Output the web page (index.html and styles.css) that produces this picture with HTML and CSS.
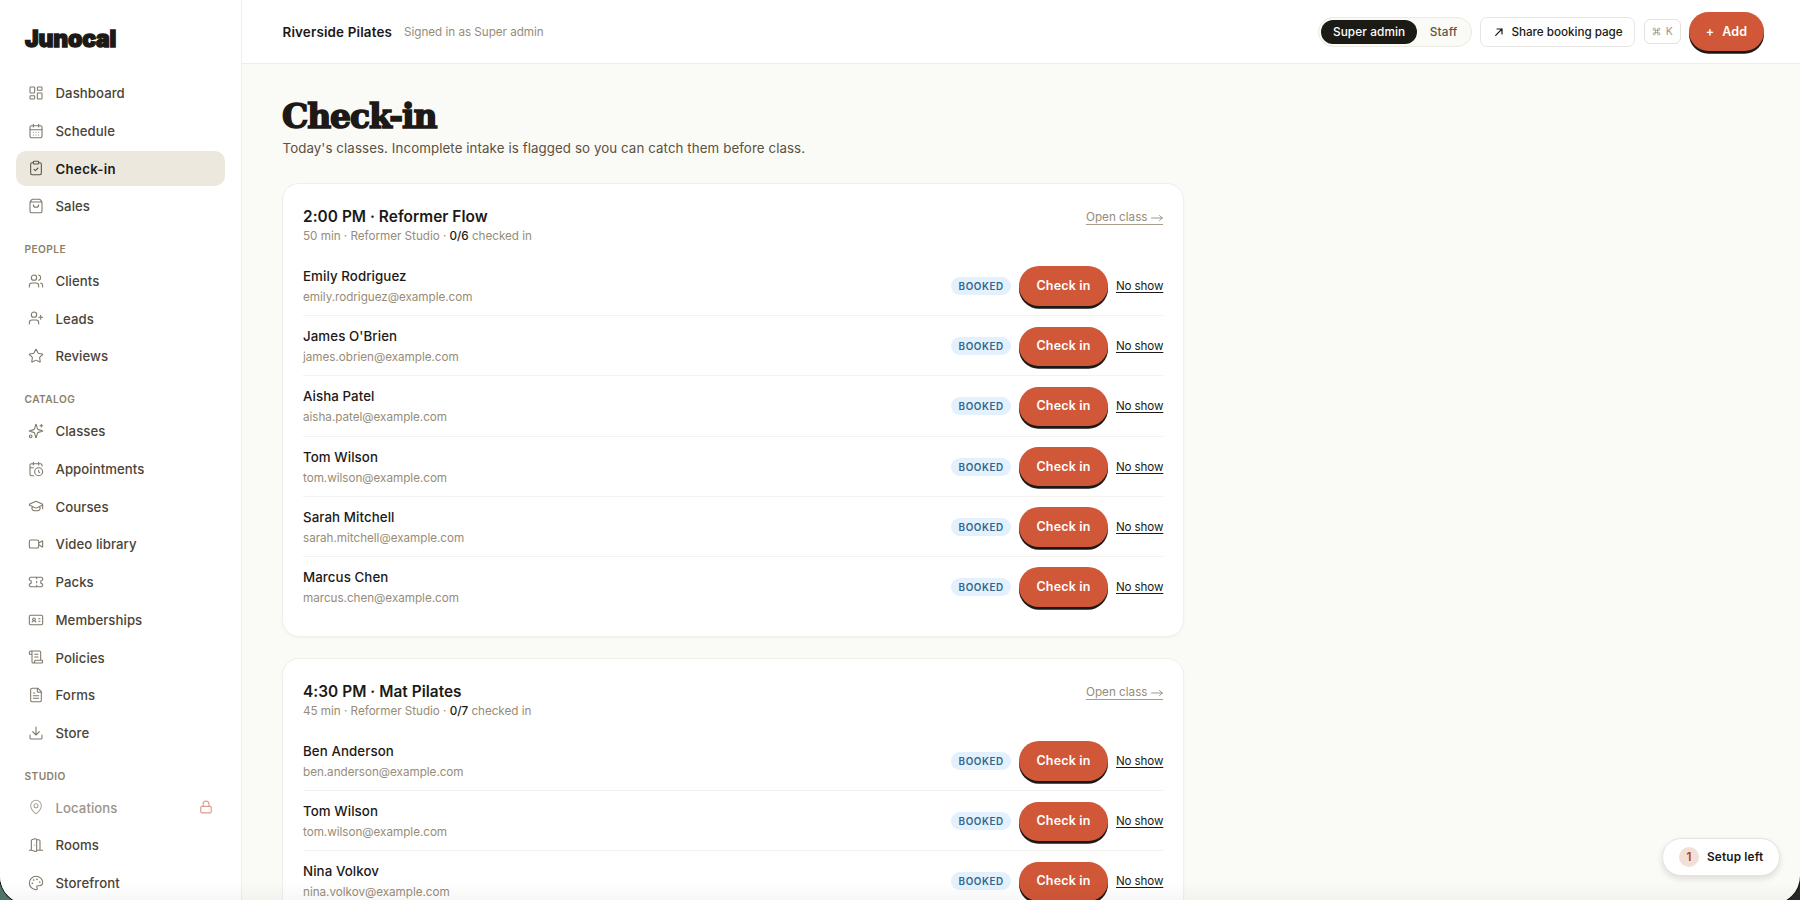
FILE: index.html
```html
<!DOCTYPE html>
<html lang="en">
<head>
<meta charset="utf-8">
<title>Check-in · Riverside Pilates</title>
<link rel="stylesheet" href="styles.css">
</head>
<body>
<div class="window">
  <aside class="sidebar">
    <div class="logo">Junocal</div>
    <nav class="nav">
      <a class="item"><svg class="icon" viewBox="0 0 24 24"><rect width="7" height="9" x="3" y="3" rx="1"/><rect width="7" height="5" x="14" y="3" rx="1"/><rect width="7" height="9" x="14" y="12" rx="1"/><rect width="7" height="5" x="3" y="16" rx="1"/></svg><span>Dashboard</span></a>
      <a class="item"><svg class="icon" viewBox="0 0 24 24"><path d="M8 2v4M16 2v4M3 10h18M8 14h.01M12 14h.01M16 14h.01M8 18h.01M12 18h.01M16 18h.01"/><rect width="18" height="18" x="3" y="4" rx="2"/></svg><span>Schedule</span></a>
      <a class="item active"><svg class="icon" viewBox="0 0 24 24"><rect width="8" height="4" x="8" y="2" rx="1"/><path d="M16 4h2a2 2 0 0 1 2 2v14a2 2 0 0 1-2 2H6a2 2 0 0 1-2-2V6a2 2 0 0 1 2-2h2M9 14l2 2 4-4"/></svg><span>Check-in</span></a>
      <a class="item"><svg class="icon" viewBox="0 0 24 24"><path d="M3.4 5.5 5.4 2.8A2 2 0 0 1 7 2h10a2 2 0 0 1 1.6.8l2 2.7A2 2 0 0 1 21 6.7V20a2 2 0 0 1-2 2H5a2 2 0 0 1-2-2V6.7a2 2 0 0 1 .4-1.2zM3.1 6h17.8M16 10a4 4 0 0 1-8 0"/></svg><span>Sales</span></a>

      <h2 class="group">People</h2>
      <a class="item"><svg class="icon" viewBox="0 0 24 24"><path d="M16 21v-2a4 4 0 0 0-4-4H6a4 4 0 0 0-4 4v2M22 21v-2a4 4 0 0 0-3-3.87M16 3.13a4 4 0 0 1 0 7.75"/><circle cx="9" cy="7" r="4"/></svg><span>Clients</span></a>
      <a class="item"><svg class="icon" viewBox="0 0 24 24"><path d="M16 21v-2a4 4 0 0 0-4-4H6a4 4 0 0 0-4 4v2M19 8v6M22 11h-6"/><circle cx="9" cy="7" r="4"/></svg><span>Leads</span></a>
      <a class="item"><svg class="icon" viewBox="0 0 24 24"><path d="M11.525 2.295a.53.53 0 0 1 .95 0l2.31 4.679a2.12 2.12 0 0 0 1.595 1.16l5.166.756a.53.53 0 0 1 .294.904l-3.736 3.638a2.12 2.12 0 0 0-.611 1.878l.882 5.14a.53.53 0 0 1-.771.56l-4.618-2.428a2.12 2.12 0 0 0-1.973 0L6.396 21.01a.53.53 0 0 1-.77-.56l.881-5.139a2.12 2.12 0 0 0-.611-1.879L2.16 9.795a.53.53 0 0 1 .294-.906l5.165-.755a2.12 2.12 0 0 0 1.597-1.16z"/></svg><span>Reviews</span></a>

      <h2 class="group">Catalog</h2>
      <a class="item"><svg class="icon" viewBox="0 0 24 24"><path d="M9.937 15.5A2 2 0 0 0 8.5 14.063l-6.135-1.582a.5.5 0 0 1 0-.962L8.5 9.936A2 2 0 0 0 9.937 8.5l1.582-6.135a.5.5 0 0 1 .963 0L14.063 8.5A2 2 0 0 0 15.5 9.937l6.135 1.581a.5.5 0 0 1 0 .964L15.5 14.063a2 2 0 0 0-1.437 1.437l-1.582 6.135a.5.5 0 0 1-.963 0zM20 2v4M22 4h-4"/><circle cx="4" cy="20" r="2"/></svg><span>Classes</span></a>
      <a class="item"><svg class="icon" viewBox="0 0 24 24"><path d="M21 7.5V6a2 2 0 0 0-2-2H5a2 2 0 0 0-2 2v14a2 2 0 0 0 2 2h3.5M16 2v4M8 2v4M3 10h5M17.5 17.5 16 16.3V14"/><circle cx="16" cy="16" r="6"/></svg><span>Appointments</span></a>
      <a class="item"><svg class="icon" viewBox="0 0 24 24"><path d="M21.42 10.922a1 1 0 0 0-.019-1.838L12.83 5.18a2 2 0 0 0-1.66 0L2.6 9.08a1 1 0 0 0 0 1.832l8.57 3.908a2 2 0 0 0 1.66 0zM22 10v6M6 12.5V16a6 3 0 0 0 12 0v-3.5"/></svg><span>Courses</span></a>
      <a class="item"><svg class="icon" viewBox="0 0 24 24"><path d="m16 13 5.223 3.482a.5.5 0 0 0 .777-.416V7.87a.5.5 0 0 0-.752-.432L16 10.5"/><rect x="2" y="6" width="14" height="12" rx="2"/></svg><span>Video library</span></a>
      <a class="item"><svg class="icon" viewBox="0 0 24 24"><path d="M2 9a3 3 0 0 1 0 6v2a2 2 0 0 0 2 2h16a2 2 0 0 0 2-2v-2a3 3 0 0 1 0-6V7a2 2 0 0 0-2-2H4a2 2 0 0 0-2 2ZM13 5v2M13 17v2M13 11v2"/></svg><span>Packs</span></a>
      <a class="item"><svg class="icon" viewBox="0 0 24 24"><path d="M16 10h2M16 14h2M6.17 15a3 3 0 0 1 5.66 0"/><circle cx="9" cy="11" r="2"/><rect x="2" y="5" width="20" height="14" rx="2"/></svg><span>Memberships</span></a>
      <a class="item"><svg class="icon" viewBox="0 0 24 24"><path d="M15 12h-5M15 8h-5M19 17V5a2 2 0 0 0-2-2H4M8 21h12a2 2 0 0 0 2-2v-1a1 1 0 0 0-1-1H11a1 1 0 0 0-1 1v1a2 2 0 1 1-4 0V5a2 2 0 1 0-4 0v2a1 1 0 0 0 1 1h3"/></svg><span>Policies</span></a>
      <a class="item"><svg class="icon" viewBox="0 0 24 24"><path d="M15 2H6a2 2 0 0 0-2 2v16a2 2 0 0 0 2 2h12a2 2 0 0 0 2-2V7ZM14 2v4a2 2 0 0 0 2 2h4M10 9H8M16 13H8M16 17H8"/></svg><span>Forms</span></a>
      <a class="item"><svg class="icon" viewBox="0 0 24 24"><path d="M21 15v4a2 2 0 0 1-2 2H5a2 2 0 0 1-2-2v-4M7 10l5 5 5-5M12 15V3"/></svg><span>Store</span></a>

      <h2 class="group">Studio</h2>
      <a class="item locked"><svg class="icon" viewBox="0 0 24 24"><path d="M20 10c0 4.993-5.539 10.193-7.399 11.799a1 1 0 0 1-1.202 0C9.539 20.193 4 14.993 4 10a8 8 0 0 1 16 0"/><circle cx="12" cy="10" r="3"/></svg><span>Locations</span><svg class="lock" viewBox="0 0 24 24"><rect width="18" height="11" x="3" y="11" rx="2"/><path d="M7 11V7a5 5 0 0 1 10 0v4"/></svg></a>
      <a class="item"><svg class="icon" viewBox="0 0 24 24"><path d="M13 4h3a2 2 0 0 1 2 2v14M2 20h3M13 20h9M10 12v.01M13 4.562v16.157a1 1 0 0 1-1.242.97L5 20V5.562a2 2 0 0 1 1.515-1.94l4-1A2 2 0 0 1 13 4.561Z"/></svg><span>Rooms</span></a>
      <a class="item"><svg class="icon" viewBox="0 0 24 24"><path d="M12 22a1 1 0 0 1 0-20 10 9 0 0 1 10 9 5 5 0 0 1-5 5h-2.25a1.75 1.75 0 0 0-1.4 2.8l.3.4a1.75 1.75 0 0 1-1.4 2.8z"/><circle cx="13.5" cy="6.5" r=".5"/><circle cx="17.5" cy="10.5" r=".5"/><circle cx="6.5" cy="12.5" r=".5"/><circle cx="8.5" cy="7.5" r=".5"/></svg><span>Storefront</span></a>
    </nav>
  </aside>

  <div class="page">
    <header class="topbar">
      <div class="studio">Riverside Pilates</div>
      <div class="role">Signed in as Super admin</div>
      <div class="actions">
        <div class="switch"><span class="switch-on">Super admin</span><span class="switch-off">Staff</span></div>
        <a class="share"><svg class="arrow" viewBox="0 0 8 8"><path d="M.7 7.3 7 1M2 1h5v5"/></svg><span>Share booking page</span></a>
        <kbd class="shortcut"><svg class="cmd" viewBox="0 0 24 24"><path d="M15 6v12a3 3 0 1 0 3-3H6a3 3 0 1 0 3 3V6a3 3 0 1 0-3 3h12a3 3 0 1 0-3-3"/></svg>K</kbd>
        <button class="button add"><span>+</span><span>Add</span></button>
      </div>
    </header>

    <main class="content">
      <h1 class="title">Check-in</h1>
      <p class="lede">Today's classes. Incomplete intake is flagged so you can catch them before class.</p>

      <section class="card">
        <div class="card-head">
          <div>
            <h3 class="class-name">2:00 PM · Reformer Flow</h3>
            <p class="meta">50 min · Reformer Studio · <b>0/6</b> checked in</p>
          </div>
          <a class="open"><span>Open class</span><svg class="long" viewBox="0 0 12 8"><path d="M.5 4h11M8.5 1.5 11.3 4 8.5 6.5"/></svg></a>
        </div>
        <div class="row"><div class="person"><div class="name">Emily Rodriguez</div><div class="email">emily.rodriguez@example.com</div></div><span class="badge">Booked</span><button class="button check">Check in</button><a class="noshow">No show</a></div>
        <div class="row"><div class="person"><div class="name">James O'Brien</div><div class="email">james.obrien@example.com</div></div><span class="badge">Booked</span><button class="button check">Check in</button><a class="noshow">No show</a></div>
        <div class="row"><div class="person"><div class="name">Aisha Patel</div><div class="email">aisha.patel@example.com</div></div><span class="badge">Booked</span><button class="button check">Check in</button><a class="noshow">No show</a></div>
        <div class="row"><div class="person"><div class="name">Tom Wilson</div><div class="email">tom.wilson@example.com</div></div><span class="badge">Booked</span><button class="button check">Check in</button><a class="noshow">No show</a></div>
        <div class="row"><div class="person"><div class="name">Sarah Mitchell</div><div class="email">sarah.mitchell@example.com</div></div><span class="badge">Booked</span><button class="button check">Check in</button><a class="noshow">No show</a></div>
        <div class="row"><div class="person"><div class="name">Marcus Chen</div><div class="email">marcus.chen@example.com</div></div><span class="badge">Booked</span><button class="button check">Check in</button><a class="noshow">No show</a></div>
      </section>

      <section class="card">
        <div class="card-head">
          <div>
            <h3 class="class-name">4:30 PM · Mat Pilates</h3>
            <p class="meta">45 min · Reformer Studio · <b>0/7</b> checked in</p>
          </div>
          <a class="open"><span>Open class</span><svg class="long" viewBox="0 0 12 8"><path d="M.5 4h11M8.5 1.5 11.3 4 8.5 6.5"/></svg></a>
        </div>
        <div class="row"><div class="person"><div class="name">Ben Anderson</div><div class="email">ben.anderson@example.com</div></div><span class="badge">Booked</span><button class="button check">Check in</button><a class="noshow">No show</a></div>
        <div class="row"><div class="person"><div class="name">Tom Wilson</div><div class="email">tom.wilson@example.com</div></div><span class="badge">Booked</span><button class="button check">Check in</button><a class="noshow">No show</a></div>
        <div class="row"><div class="person"><div class="name">Nina Volkov</div><div class="email">nina.volkov@example.com</div></div><span class="badge">Booked</span><button class="button check">Check in</button><a class="noshow">No show</a></div>
      </section>
    </main>
  </div>
  <div class="fade"></div>
  <div class="setup"><span class="count">1</span><span>Setup left</span></div>
</div>
</body>
</html>
```
FILE: styles.css
```css
* { box-sizing: border-box; }
html { background: linear-gradient(90deg, #4f7568 50%, #252a29 50%); }
body {
  margin: 0;
  height: 900px;
  overflow: hidden;
  font-family: Inter, "Liberation Sans", sans-serif;
  color: #1c1917;
}
h1, h2, h3, p { margin: 0; }
svg { fill: none; stroke: currentColor; stroke-linecap: round; stroke-linejoin: round; flex: none; }

.window {
  position: relative;
  display: flex;
  height: 904px;
  overflow: hidden;
  background: #fafaf6;
  border-radius: 0 0 28px 28px;
  box-shadow: 0 0 0 1px #111;
}

.sidebar {
  width: 242px;
  flex: none;
  padding: 24px 16px 0 16px;
  background: #fff;
  border-right: 1px solid #eeeeec;
}
.logo {
  height: 51px;
  padding-left: 9px;
  font-size: 23px;
  line-height: 30px;
  font-weight: 900;
  letter-spacing: -0.2px;
  -webkit-text-stroke: 1.3px #1c1917;
}
.nav { display: flex; flex-direction: column; gap: 2px; }
.item {
  display: flex;
  align-items: center;
  flex: none;
  gap: 12px;
  height: 35.75px;
  padding: 0 12px 0 12px;
  border-radius: 10px;
  font-size: 13.2px;
  line-height: 18px;
  font-weight: 500;
  letter-spacing: 0.06px;
  color: #4b4438;
}
.item span { margin-left: -0.5px; padding-top: 0.5px; }
.item.active { background: #ece8dd; color: #1c1917; font-weight: 600; letter-spacing: 0.35px; }
.icon { width: 16px; height: 16px; stroke-width: 1.6; color: #7f776a; }
.active .icon { color: #5a5347; }
.locked { color: #9b958b; }
.locked .icon { color: #aaa59c; }
.lock { width: 14px; height: 14px; margin-left: auto; stroke-width: 2; color: #e19a8b; }
.group {
  flex: none;
  height: 34.85px;
  padding: 14px 0 0 8.5px;
  font-size: 10.2px;
  line-height: 18px;
  font-weight: 600;
  letter-spacing: 0.4px;
  text-transform: uppercase;
  color: #8b8168;
}

.page { flex: 1; min-width: 0; }
.topbar {
  display: flex;
  align-items: center;
  height: 64px;
  padding: 0 36px 0 40.5px;
  background: #fff;
  border-bottom: 1px solid #ececea;
}
.studio { width: 109.5px; font-size: 13.4px; font-weight: 600; letter-spacing: 0.16px; white-space: nowrap; }
.role { margin-left: 12px; font-size: 11.7px; letter-spacing: -0.03px; color: #978c78; }
.actions { display: flex; align-items: center; gap: 8.3px; margin-left: auto; }
.switch {
  display: flex;
  width: 154px;
  height: 30px;
  padding: 2px;
  border: 1px solid #eae9e2;
  border-radius: 15px;
  background: #fafaf6;
  font-size: 11.8px;
  font-weight: 500;
  line-height: 24px;
  text-align: center;
}
.switch-on { width: 96px; border-radius: 12px; background: #1c1a14; color: #fff; letter-spacing: 0.1px; }
.switch-off { flex: 1; padding-left: 1px; color: #5d5446; letter-spacing: 0.15px; }
.share {
  display: flex;
  align-items: center;
  gap: 8px;
  width: 155px;
  height: 30px;
  padding-left: 14px;
  border: 1px solid #e7e6e2;
  border-radius: 7px;
  font-size: 11.7px;
  font-weight: 500;
  letter-spacing: -0.03px;
  white-space: nowrap;
}
.arrow { width: 8px; height: 8px; stroke-width: 1.2; }
.shortcut {
  display: flex;
  align-items: center;
  justify-content: center;
  gap: 5px;
  width: 37px;
  height: 25px;
  border: 1px solid #e3e2de;
  border-radius: 6px;
  font-family: inherit;
  font-size: 10.5px;
  color: #a09682;
}
.cmd { width: 9px; height: 9px; stroke-width: 2.2; }
.button {
  flex: none;
  height: 39.5px;
  margin: 0;
  padding: 0 0 1px;
  border: 0;
  border-radius: 20px;
  background: #d05737;
  box-shadow: 0 2.7px 0 #1c1917;
  color: #fff;
  font-family: inherit;
  font-size: 12.5px;
  font-weight: 600;
  letter-spacing: 0.18px;
}
.add { display: flex; align-items: center; justify-content: center; gap: 8px; width: 75px; }

.content { width: 942px; padding: 33px 0 0 40px; }
.title {
  height: 39px;
  font-family: "DejaVu Serif", serif;
  font-size: 33px;
  line-height: 39px;
  font-weight: 700;
  letter-spacing: -1.1px;
  -webkit-text-stroke: 1.6px #1c1917;
}
.lede { height: 25px; padding-left: 0.5px; font-size: 13.3px; line-height: 25px; letter-spacing: 0.09px; color: #5a5142; }

.card {
  margin-top: 22px;
  height: 454px;
  padding: 21px 20px 19px;
  border: 1px solid #f0efeb;
  border-radius: 17px;
  background: #fff;
  box-shadow: 0 1px 2px rgba(40, 35, 20, 0.04);
}
.card + .card { margin-top: 21px; }
.card-head { display: flex; justify-content: space-between; height: 51px; }
.class-name { font-size: 15.4px; line-height: 23px; font-weight: 600; letter-spacing: 0.04px; }
.meta { font-size: 11.7px; line-height: 17px; letter-spacing: -0.03px; color: #978c78; }
.meta b { font-weight: 500; color: #1c1917; }
.open {
  display: flex;
  align-items: center;
  justify-content: space-between;
  width: 77px;
  height: 14px;
  margin-top: 5.5px;
  font-size: 11.7px;
  line-height: 14px;
  color: #978c78;
  border-bottom: 1px solid #a79d8b;
  white-space: nowrap;
}
.long { width: 12px; height: 8px; margin-top: 2px; stroke-width: 0.9; }
.row {
  display: flex;
  align-items: center;
  gap: 8.2px;
  height: 60.2px;
  padding-top: 1px;
  border-bottom: 1px solid #f2f2f0;
}
.row:last-child { border-bottom-color: transparent; }
.person { flex: 1; padding-top: 1px; }
.name { font-size: 13.3px; line-height: 20px; font-weight: 500; letter-spacing: 0.08px; }
.email { padding-top: 1px; font-size: 11.7px; line-height: 20px; letter-spacing: -0.03px; color: #978c78; }
.badge {
  width: 60px;
  height: 18px;
  border-radius: 9px;
  background: #e2f1fd;
  color: #33668f;
  font-size: 9.9px;
  line-height: 18px;
  font-weight: 600;
  letter-spacing: 0.55px;
  text-align: center;
  text-transform: uppercase;
}
.check { width: 88.5px; }
.noshow { width: 47px; font-size: 11.6px; letter-spacing: -0.12px; text-decoration: underline; text-underline-offset: 2px; white-space: nowrap; }

/* Floating onboarding pill */
.setup {
  position: absolute;
  right: 20px;
  top: 838px;
  display: flex;
  align-items: center;
  gap: 8px;
  width: 118px;
  height: 38px;
  padding-left: 16px;
  border: 1px solid #e6e4df;
  border-radius: 19px;
  background: #fff;
  box-shadow: 0 3px 6px rgba(30, 25, 15, 0.12);
  font-size: 11.8px;
  font-weight: 600;
  letter-spacing: 0.15px;
  white-space: nowrap;
}
.count {
  width: 20px;
  height: 20px;
  border-radius: 50%;
  background: #f2dfd6;
  color: #b4432f;
  line-height: 20px;
  text-align: center;
}
.fade {
  position: absolute;
  left: 0;
  right: 0;
  bottom: 0;
  height: 22px;
  background: linear-gradient(transparent, rgba(0, 0, 0, 0.04));
}
```
